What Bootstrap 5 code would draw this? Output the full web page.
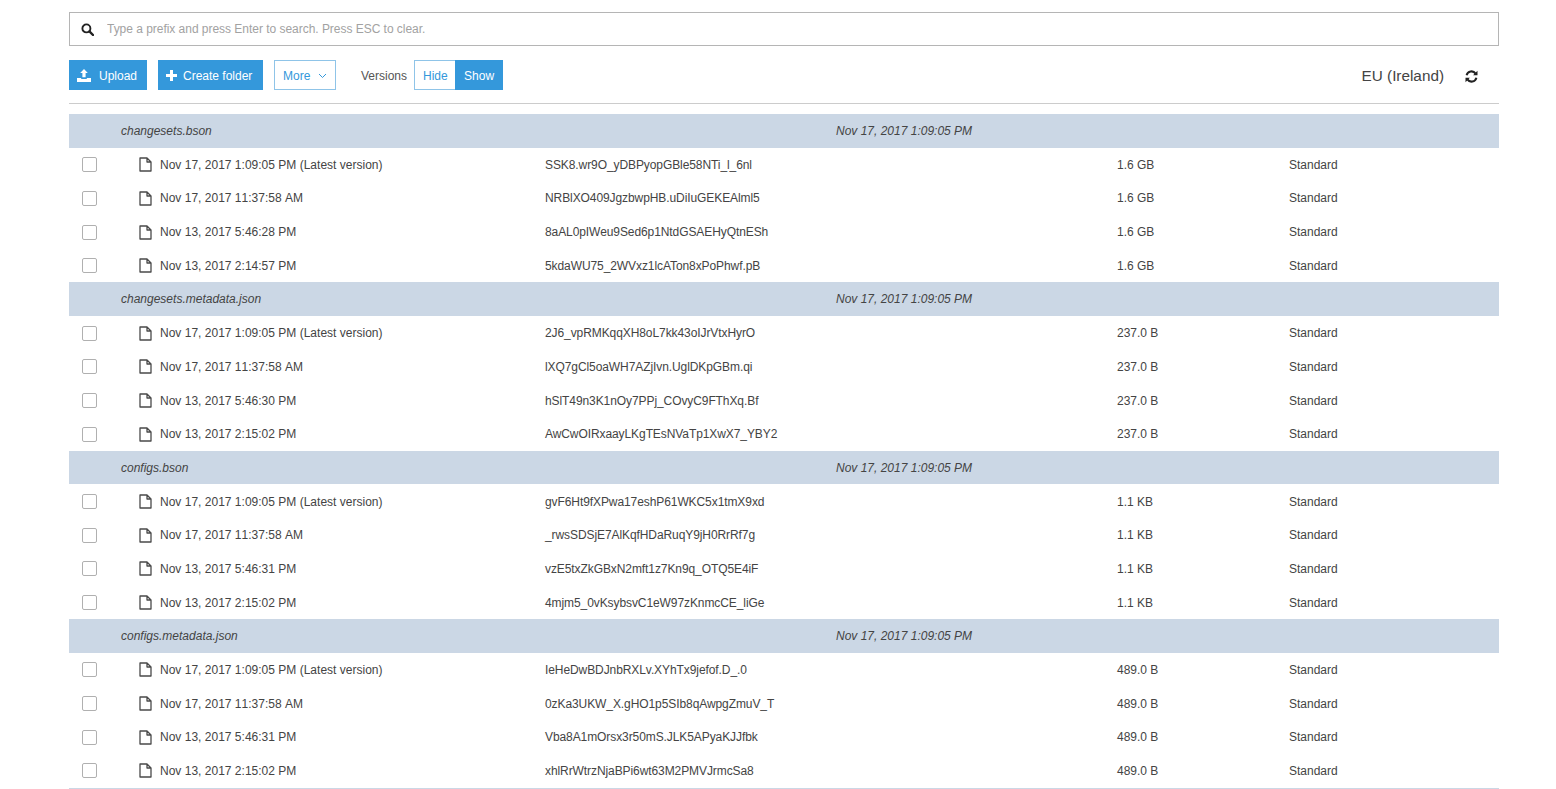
<!doctype html>
<html lang="en">
<head>
<meta charset="utf-8">
<title>Versions</title>
<link href="https://cdn.jsdelivr.net/npm/bootstrap@5.3.0/dist/css/bootstrap.min.css" rel="stylesheet">
<style>
body{font-family:"Liberation Sans",Arial,sans-serif;font-size:12px;color:#444;background:#fff;overflow:hidden}
.page-wrap{width:1430px;margin-left:69px;padding-top:12px}
.search-box{height:34px;border:1px solid #b5b5b5;padding-left:11px;gap:13px}
.search-box input{border:0;outline:0;flex:1;font-size:12px;padding:0;color:#444;letter-spacing:-.03px}
.search-box input::placeholder{color:#a2a2a2}
.tool-bar{height:30px;margin-top:14px}
.act-btn{height:30px;padding:1px 8px 0;border-radius:0;font-size:12px;line-height:28px;border:1px solid #3498db;background:#3498db;color:#fff;display:inline-flex;align-items:center;gap:8px;flex:none;white-space:nowrap}
.act-btn:hover{background:#3498db;color:#fff;border-color:#3498db}
.act-btn.outline-act{background:#fff;color:#3498db;border-color:#8fc4e8}
.up-btn{width:78px;margin-right:11px;padding-left:7px}
.new-btn{width:105px;margin-right:11px;padding-left:7px;gap:6px}
.more-btn{width:62px;margin-right:25px}
.more-btn svg{flex:none}
.hide-btn{width:42px}
.show-btn{width:48px}
.ver-label{margin-right:7px;color:#555;padding-top:1px}
.region-label{font-size:15.3px;color:#444;margin-right:21px;padding-top:2px}
.sync-ico{margin-right:21px;margin-top:2px}
.rule{height:1px;background:#ccc;margin:13px 0 10px}
.grp-row{height:33.68px;background:#cbd7e5;font-style:italic;display:flex;align-items:center;color:#444;padding-top:.6px}
.grp-name{width:767px;padding-left:52px}
.ver-row{height:33.68px;display:flex;align-items:center;color:#444;padding-top:.6px}
.cell-check{width:70px;padding-left:13px;display:flex;align-items:center}
.fake-check{width:15px;height:15px;margin:0;border:1px solid #b0b0b0;border-radius:2px;appearance:none;background:#fff;display:block}
.cell-ico{width:21px;display:flex;align-items:center}
.cell-date{width:385px;font-kerning:none;letter-spacing:.01px}
.cell-id{width:572px;letter-spacing:-.085px}
.cell-size{width:172px}
.list-end{border-bottom:1px solid #cbd7e5;padding-bottom:.5px}
</style>
</head>
<body>
<div class="page-wrap">
  <div class="search-box d-flex align-items-center">
    <svg width="13" height="13" viewBox="0 0 13 13" fill="none" stroke="#222" aria-hidden="true"><circle cx="5.4" cy="5.4" r="4" stroke-width="1.9"/><path d="M8.4 8.4 12 12" stroke-width="2.4" stroke-linecap="round"/></svg>
    <input type="text" placeholder="Type a prefix and press Enter to search. Press ESC to clear.">
  </div>

  <div class="tool-bar d-flex align-items-center">
    <button class="btn act-btn up-btn" type="button">
      <svg width="14" height="13" viewBox="0 0 14 13" fill="#fff" aria-hidden="true"><path d="M7 0 10.8 4H8.6v4.2H5.4V4H3.2zM0 9h4.2v.9h5.6V9H14v4H0z"/></svg>
      Upload
    </button>
    <button class="btn act-btn new-btn" type="button">
      <svg width="11" height="11" viewBox="0 0 11 11" fill="#fff" aria-hidden="true"><path d="M4 0h3v4h4v3H7v4H4V7H0V4h4z"/></svg>
      Create folder
    </button>
    <button class="btn act-btn outline-act more-btn" type="button">
      More
      <svg width="9" height="6" viewBox="0 0 9 6" fill="none" stroke="#3498db" aria-hidden="true"><path d="M1 1l3.5 3.5L8 1"/></svg>
    </button>
    <span class="ver-label">Versions</span>
    <div class="btn-group" role="group">
      <button class="btn act-btn outline-act hide-btn" type="button">Hide</button>
      <button class="btn act-btn show-btn" type="button">Show</button>
    </div>
    <span class="region-label ms-auto">EU (Ireland)</span>
    <svg class="sync-ico" width="13" height="13" viewBox="0 0 13 13" fill="none" stroke="#222" stroke-width="2" aria-hidden="true"><path d="M1.6 5.2A5 5 0 0 1 10.6 3.6"/><path d="M11.4 7.8A5 5 0 0 1 2.4 9.4"/><path d="M12.5.8v4.4H8.1z" fill="#222" stroke="none"/><path d="M.5 12.2V7.8h4.4z" fill="#222" stroke="none"/></svg>
  </div>

  <div class="rule"></div>

  <div class="list-end">
    <div class="grp-row"><span class="grp-name">changesets.bson</span><span>Nov 17, 2017 1:09:05 PM</span></div>
    <div class="ver-row"><div class="cell-check"><input class="fake-check" type="checkbox" aria-label="select"></div><div class="cell-ico"><svg width="13" height="15" viewBox="0 0 13 15" fill="none" stroke="#4a4a4a" stroke-width="1.3" stroke-linejoin="round" aria-hidden="true"><path d="M1 1h7l4 4v9H1zM8 1v4h4"/></svg></div><div class="cell-date">Nov 17, 2017 1:09:05 PM (Latest version)</div><div class="cell-id">SSK8.wr9O_yDBPyopGBle58NTi_l_6nl</div><div class="cell-size">1.6 GB</div><div>Standard</div></div>
    <div class="ver-row"><div class="cell-check"><input class="fake-check" type="checkbox" aria-label="select"></div><div class="cell-ico"><svg width="13" height="15" viewBox="0 0 13 15" fill="none" stroke="#4a4a4a" stroke-width="1.3" stroke-linejoin="round" aria-hidden="true"><path d="M1 1h7l4 4v9H1zM8 1v4h4"/></svg></div><div class="cell-date">Nov 17, 2017 11:37:58 AM</div><div class="cell-id">NRBlXO409JgzbwpHB.uDiIuGEKEAlml5</div><div class="cell-size">1.6 GB</div><div>Standard</div></div>
    <div class="ver-row"><div class="cell-check"><input class="fake-check" type="checkbox" aria-label="select"></div><div class="cell-ico"><svg width="13" height="15" viewBox="0 0 13 15" fill="none" stroke="#4a4a4a" stroke-width="1.3" stroke-linejoin="round" aria-hidden="true"><path d="M1 1h7l4 4v9H1zM8 1v4h4"/></svg></div><div class="cell-date">Nov 13, 2017 5:46:28 PM</div><div class="cell-id">8aAL0pIWeu9Sed6p1NtdGSAEHyQtnESh</div><div class="cell-size">1.6 GB</div><div>Standard</div></div>
    <div class="ver-row"><div class="cell-check"><input class="fake-check" type="checkbox" aria-label="select"></div><div class="cell-ico"><svg width="13" height="15" viewBox="0 0 13 15" fill="none" stroke="#4a4a4a" stroke-width="1.3" stroke-linejoin="round" aria-hidden="true"><path d="M1 1h7l4 4v9H1zM8 1v4h4"/></svg></div><div class="cell-date">Nov 13, 2017 2:14:57 PM</div><div class="cell-id">5kdaWU75_2WVxz1lcATon8xPoPhwf.pB</div><div class="cell-size">1.6 GB</div><div>Standard</div></div>

    <div class="grp-row"><span class="grp-name">changesets.metadata.json</span><span>Nov 17, 2017 1:09:05 PM</span></div>
    <div class="ver-row"><div class="cell-check"><input class="fake-check" type="checkbox" aria-label="select"></div><div class="cell-ico"><svg width="13" height="15" viewBox="0 0 13 15" fill="none" stroke="#4a4a4a" stroke-width="1.3" stroke-linejoin="round" aria-hidden="true"><path d="M1 1h7l4 4v9H1zM8 1v4h4"/></svg></div><div class="cell-date">Nov 17, 2017 1:09:05 PM (Latest version)</div><div class="cell-id">2J6_vpRMKqqXH8oL7kk43oIJrVtxHyrO</div><div class="cell-size">237.0 B</div><div>Standard</div></div>
    <div class="ver-row"><div class="cell-check"><input class="fake-check" type="checkbox" aria-label="select"></div><div class="cell-ico"><svg width="13" height="15" viewBox="0 0 13 15" fill="none" stroke="#4a4a4a" stroke-width="1.3" stroke-linejoin="round" aria-hidden="true"><path d="M1 1h7l4 4v9H1zM8 1v4h4"/></svg></div><div class="cell-date">Nov 17, 2017 11:37:58 AM</div><div class="cell-id">lXQ7gCl5oaWH7AZjIvn.UglDKpGBm.qi</div><div class="cell-size">237.0 B</div><div>Standard</div></div>
    <div class="ver-row"><div class="cell-check"><input class="fake-check" type="checkbox" aria-label="select"></div><div class="cell-ico"><svg width="13" height="15" viewBox="0 0 13 15" fill="none" stroke="#4a4a4a" stroke-width="1.3" stroke-linejoin="round" aria-hidden="true"><path d="M1 1h7l4 4v9H1zM8 1v4h4"/></svg></div><div class="cell-date">Nov 13, 2017 5:46:30 PM</div><div class="cell-id">hSlT49n3K1nOy7PPj_COvyC9FThXq.Bf</div><div class="cell-size">237.0 B</div><div>Standard</div></div>
    <div class="ver-row"><div class="cell-check"><input class="fake-check" type="checkbox" aria-label="select"></div><div class="cell-ico"><svg width="13" height="15" viewBox="0 0 13 15" fill="none" stroke="#4a4a4a" stroke-width="1.3" stroke-linejoin="round" aria-hidden="true"><path d="M1 1h7l4 4v9H1zM8 1v4h4"/></svg></div><div class="cell-date">Nov 13, 2017 2:15:02 PM</div><div class="cell-id">AwCwOIRxaayLKgTEsNVaTp1XwX7_YBY2</div><div class="cell-size">237.0 B</div><div>Standard</div></div>

    <div class="grp-row"><span class="grp-name">configs.bson</span><span>Nov 17, 2017 1:09:05 PM</span></div>
    <div class="ver-row"><div class="cell-check"><input class="fake-check" type="checkbox" aria-label="select"></div><div class="cell-ico"><svg width="13" height="15" viewBox="0 0 13 15" fill="none" stroke="#4a4a4a" stroke-width="1.3" stroke-linejoin="round" aria-hidden="true"><path d="M1 1h7l4 4v9H1zM8 1v4h4"/></svg></div><div class="cell-date">Nov 17, 2017 1:09:05 PM (Latest version)</div><div class="cell-id">gvF6Ht9fXPwa17eshP61WKC5x1tmX9xd</div><div class="cell-size">1.1 KB</div><div>Standard</div></div>
    <div class="ver-row"><div class="cell-check"><input class="fake-check" type="checkbox" aria-label="select"></div><div class="cell-ico"><svg width="13" height="15" viewBox="0 0 13 15" fill="none" stroke="#4a4a4a" stroke-width="1.3" stroke-linejoin="round" aria-hidden="true"><path d="M1 1h7l4 4v9H1zM8 1v4h4"/></svg></div><div class="cell-date">Nov 17, 2017 11:37:58 AM</div><div class="cell-id">_rwsSDSjE7AlKqfHDaRuqY9jH0RrRf7g</div><div class="cell-size">1.1 KB</div><div>Standard</div></div>
    <div class="ver-row"><div class="cell-check"><input class="fake-check" type="checkbox" aria-label="select"></div><div class="cell-ico"><svg width="13" height="15" viewBox="0 0 13 15" fill="none" stroke="#4a4a4a" stroke-width="1.3" stroke-linejoin="round" aria-hidden="true"><path d="M1 1h7l4 4v9H1zM8 1v4h4"/></svg></div><div class="cell-date">Nov 13, 2017 5:46:31 PM</div><div class="cell-id">vzE5txZkGBxN2mft1z7Kn9q_OTQ5E4iF</div><div class="cell-size">1.1 KB</div><div>Standard</div></div>
    <div class="ver-row"><div class="cell-check"><input class="fake-check" type="checkbox" aria-label="select"></div><div class="cell-ico"><svg width="13" height="15" viewBox="0 0 13 15" fill="none" stroke="#4a4a4a" stroke-width="1.3" stroke-linejoin="round" aria-hidden="true"><path d="M1 1h7l4 4v9H1zM8 1v4h4"/></svg></div><div class="cell-date">Nov 13, 2017 2:15:02 PM</div><div class="cell-id">4mjm5_0vKsybsvC1eW97zKnmcCE_liGe</div><div class="cell-size">1.1 KB</div><div>Standard</div></div>

    <div class="grp-row"><span class="grp-name">configs.metadata.json</span><span>Nov 17, 2017 1:09:05 PM</span></div>
    <div class="ver-row"><div class="cell-check"><input class="fake-check" type="checkbox" aria-label="select"></div><div class="cell-ico"><svg width="13" height="15" viewBox="0 0 13 15" fill="none" stroke="#4a4a4a" stroke-width="1.3" stroke-linejoin="round" aria-hidden="true"><path d="M1 1h7l4 4v9H1zM8 1v4h4"/></svg></div><div class="cell-date">Nov 17, 2017 1:09:05 PM (Latest version)</div><div class="cell-id">IeHeDwBDJnbRXLv.XYhTx9jefof.D_.0</div><div class="cell-size">489.0 B</div><div>Standard</div></div>
    <div class="ver-row"><div class="cell-check"><input class="fake-check" type="checkbox" aria-label="select"></div><div class="cell-ico"><svg width="13" height="15" viewBox="0 0 13 15" fill="none" stroke="#4a4a4a" stroke-width="1.3" stroke-linejoin="round" aria-hidden="true"><path d="M1 1h7l4 4v9H1zM8 1v4h4"/></svg></div><div class="cell-date">Nov 17, 2017 11:37:58 AM</div><div class="cell-id">0zKa3UKW_X.gHO1p5SIb8qAwpgZmuV_T</div><div class="cell-size">489.0 B</div><div>Standard</div></div>
    <div class="ver-row"><div class="cell-check"><input class="fake-check" type="checkbox" aria-label="select"></div><div class="cell-ico"><svg width="13" height="15" viewBox="0 0 13 15" fill="none" stroke="#4a4a4a" stroke-width="1.3" stroke-linejoin="round" aria-hidden="true"><path d="M1 1h7l4 4v9H1zM8 1v4h4"/></svg></div><div class="cell-date">Nov 13, 2017 5:46:31 PM</div><div class="cell-id">Vba8A1mOrsx3r50mS.JLK5APyaKJJfbk</div><div class="cell-size">489.0 B</div><div>Standard</div></div>
    <div class="ver-row"><div class="cell-check"><input class="fake-check" type="checkbox" aria-label="select"></div><div class="cell-ico"><svg width="13" height="15" viewBox="0 0 13 15" fill="none" stroke="#4a4a4a" stroke-width="1.3" stroke-linejoin="round" aria-hidden="true"><path d="M1 1h7l4 4v9H1zM8 1v4h4"/></svg></div><div class="cell-date">Nov 13, 2017 2:15:02 PM</div><div class="cell-id">xhlRrWtrzNjaBPi6wt63M2PMVJrmcSa8</div><div class="cell-size">489.0 B</div><div>Standard</div></div>
  </div>
</div>
<script src="https://cdn.jsdelivr.net/npm/bootstrap@5.3.0/dist/js/bootstrap.bundle.min.js"></script>
</body>
</html>
